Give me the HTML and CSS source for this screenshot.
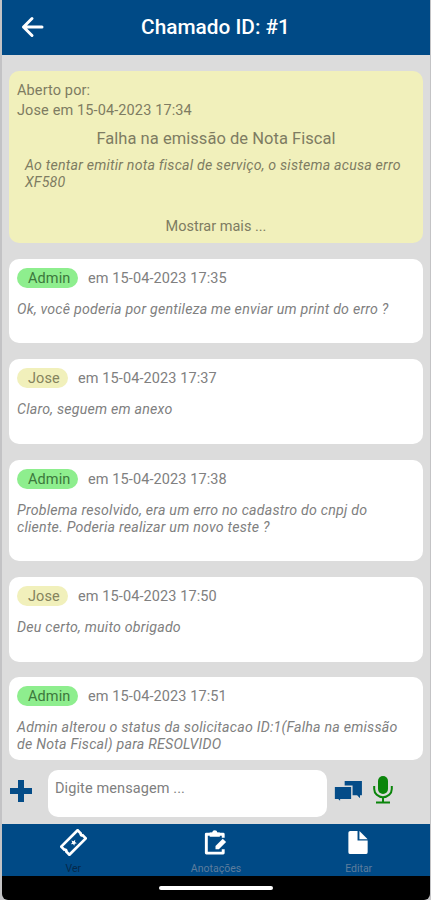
FILE: index.html
```html
<!DOCTYPE html>
<html lang="pt-BR">
<head>
<meta charset="UTF-8">
<meta name="viewport" content="width=device-width, initial-scale=1.0">
<title>Chamado ID: #1</title>
<link rel="stylesheet" href="styles.css">
</head>
<body>
<div class="app">
    <header class="topbar">
        <svg class="back" viewBox="0 0 24 22">
            <path d="M22 11H3.500M12 2.500L3.500 11L12 19.500" fill="none" stroke="#fff" stroke-width="3" stroke-linecap="round" stroke-linejoin="round" />
        </svg>
        <h1>Chamado ID: #1</h1>
    </header>

    <main class="messages">
        <section class="ticket">
            <p class="opened">Aberto por:<br>Jose em 15-04-2023 17:34</p>
            <h2>Falha na emissão de Nota Fiscal</h2>
            <p class="description">Ao tentar emitir nota fiscal de serviço, o sistema acusa erro<br>XF580</p>
            <p class="more">Mostrar mais ...</p>
        </section>

        <article class="message">
            <div class="meta"><span class="badge admin">Admin</span><span class="date">em 15-04-2023 17:35</span></div>
            <p class="text">Ok, você poderia por gentileza me enviar um print do erro ?</p>
        </article>
        <article class="message">
            <div class="meta"><span class="badge user">Jose</span><span class="date">em 15-04-2023 17:37</span></div>
            <p class="text">Claro, seguem em anexo</p>
        </article>
        <article class="message tall">
            <div class="meta"><span class="badge admin">Admin</span><span class="date">em 15-04-2023 17:38</span></div>
            <p class="text">Problema resolvido, era um erro no cadastro do cnpj do<br>cliente. Poderia realizar um novo teste ?</p>
        </article>
        <article class="message">
            <div class="meta"><span class="badge user">Jose</span><span class="date">em 15-04-2023 17:50</span></div>
            <p class="text">Deu certo, muito obrigado</p>
        </article>
        <article class="message last">
            <div class="meta"><span class="badge admin">Admin</span><span class="date">em 15-04-2023 17:51</span></div>
            <p class="text">Admin alterou o status da solicitacao ID:1(Falha na emissão<br>de Nota Fiscal) para RESOLVIDO</p>
        </article>
    </main>

    <div class="composer">
        <svg class="plus" viewBox="0 0 24 24">
            <path d="M9 1h6v8h8v6h-8v8H9v-8H1V9h8z" fill="#044c88" />
        </svg>
        <div class="field">Digite mensagem ...</div>
        <svg class="chat" viewBox="0 0 30 24">
            <path d="M11 1h18v15h-2v3l-3-3H11z" fill="#044c88" />
            <path d="M0 6.500h18.500v14H7v3l-3-3H0z" fill="#044c88" stroke="#dcdcdc" stroke-width="1.500" />
        </svg>
        <svg class="mic" viewBox="0 0 20 28">
            <rect x="5" y="0" width="10" height="18" rx="5" fill="#0b850b" />
            <path d="M1.200 10v3a8.800 8.200 0 0 0 17.600 0v-3M10 21v5M3 26.500h14" fill="none" stroke="#0b850b" stroke-width="2" />
        </svg>
    </div>

    <nav class="tabs">
        <div class="tab active">
            <svg viewBox="0 0 28 28">
                <g transform="rotate(-45 14 14)">
                    <path d="M2 8h24v4.500a1.700 1.700 0 0 0 0 3V20H2v-4.500a1.700 1.700 0 0 0 0-3z" fill="none" stroke="#fff" stroke-width="2.800" />
                    <path d="M14 11l.9 2.100 2.300.2-1.800 1.500.5 2.200-1.900-1.200-1.900 1.200.5-2.200-1.800-1.500 2.300-.2z" fill="#fff" />
                </g>
            </svg>
            <span>Ver</span>
        </div>
        <div class="tab">
            <svg viewBox="0 0 28 28">
                <path d="M22 9V5.500H4.500V25H22v-4" fill="none" stroke="#fff" stroke-width="3" stroke-linejoin="round" />
                <path d="M8 3.500h2.500a2.800 2.800 0 0 1 5.500 0h2.500V8H8z" fill="#fff" />
                <path d="M14 21v-3.500l7.500-7.500 3.500 3.500-7.500 7.500z" fill="#fff" />
            </svg>
            <span>Anotações</span>
        </div>
        <div class="tab">
            <svg viewBox="0 0 28 28">
                <path d="M5.500 2H13v10h10.500v12a2 2 0 0 1-2 2h-16a2 2 0 0 1-2-2V4a2 2 0 0 1 2-2z" fill="#fff" />
                <path d="M15 2l8.500 8.500H15z" fill="#fff" />
            </svg>
            <span>Editar</span>
        </div>
    </nav>
    <div class="homebar"><div class="handle"></div></div>
</div>
</body>
</html>
```

FILE: styles.css
```css
* {
    box-sizing: border-box;
}

body {
    margin: 0;
    background: #c3c3c5;
    font-family: Roboto, "Liberation Sans", sans-serif;
    color: #808080;
}

h1, h2, p {
    margin: 0;
}

.app {
    display: flex;
    flex-direction: column;
    width: 428px;
    height: 900px;
    margin-left: 2px;
    background: #dcdcdc;
    overflow: hidden;
    border-radius: 0 0 6px 6px;
}

.topbar {
    display: grid;
    grid-template-columns: 60px 1fr 61px;
    align-items: center;
    height: 55px;
    flex: none;
    padding-bottom: 2px;
    background: #004a86;
    color: #fff;
}

.back {
    width: 24px;
    height: 22px;
    margin-left: 18px;
}

.topbar h1 {
    font-size: 20.800px;
    font-weight: 500;
    text-align: center;
    white-space: nowrap;
}

.messages {
    display: flex;
    flex-direction: column;
    gap: 15.900px;
    height: 705px;
    flex: none;
    padding: 16px 7px 0;
}

.ticket {
    height: 172px;
    flex: none;
    padding: 10px 8px;
    border-radius: 10px;
    background: #f1f0bb;
    color: #7e7c62;
}

.opened {
    font-size: 14.500px;
    line-height: 20px;
    letter-spacing: 0.12px;
}

.ticket h2 {
    margin-top: 8px;
    font-size: 16.500px;
    font-weight: 400;
    line-height: 20px;
    letter-spacing: 0.04px;
    text-align: center;
}

.description {
    margin: 8px 0 0 8px;
    font-size: 14.200px;
    font-style: italic;
    line-height: 17px;
    letter-spacing: 0.2px;
    white-space: nowrap;
}

.more {
    margin-top: 26px;
    font-size: 14.500px;
    line-height: 20px;
    text-align: center;
}

.message {
    height: 84.500px;
    flex: none;
    padding: 9px 8px;
    border-radius: 10px;
    background: #fff;
}

.message.tall {
    height: 101.500px;
}

.message.last {
    height: 83px;
}

.meta {
    display: flex;
    gap: 10px;
    font-size: 14.500px;
    line-height: 20px;
    letter-spacing: 0.1px;
}

.badge {
    width: 61px;
    height: 20px;
    padding: 1px 0 0 11px;
    border-radius: 10px;
    color: #3c783c;
    background: #8eee8e;
}

.badge.user {
    width: 51px;
    color: #85835d;
    background: #f1f0bb;
}

.date {
    padding-top: 1px;
}

.text {
    margin-top: 12px;
    font-size: 14.200px;
    font-style: italic;
    line-height: 17px;
    letter-spacing: 0.22px;
    white-space: nowrap;
}

.composer {
    display: flex;
    align-items: flex-start;
    height: 64px;
    flex: none;
    padding: 10px 7px;
}

.plus {
    width: 24px;
    height: 24px;
    margin-top: 9px;
}

.field {
    width: 279px;
    height: 47px;
    margin-left: 15px;
    padding: 9px 7px;
    border-radius: 10px;
    background: #fff;
    font-size: 14.500px;
    line-height: 19px;
    letter-spacing: 0.1px;
}

.chat {
    width: 29px;
    height: 23px;
    margin: 10px 0 0 7px;
}

.mic {
    width: 20px;
    height: 28px;
    margin: 6px 0 0 10px;
}

.tabs {
    display: grid;
    grid-template-columns: repeat(3, 1fr);
    height: 52px;
    flex: none;
    background: #004a86;
}

.tab {
    display: flex;
    flex-direction: column;
    align-items: center;
    padding-top: 5px;
    font-size: 10.500px;
    line-height: 13px;
    color: #5d7d9d;
}

.tab svg {
    width: 27px;
    height: 27px;
    margin-bottom: 6px;
}

.tab.active {
    color: #06294b;
}

.homebar {
    display: flex;
    justify-content: center;
    height: 28px;
    flex: none;
    padding-top: 10px;
    background: #000;
}

.handle {
    width: 114px;
    height: 4px;
    border-radius: 2px;
    background: #fff;
}
```
